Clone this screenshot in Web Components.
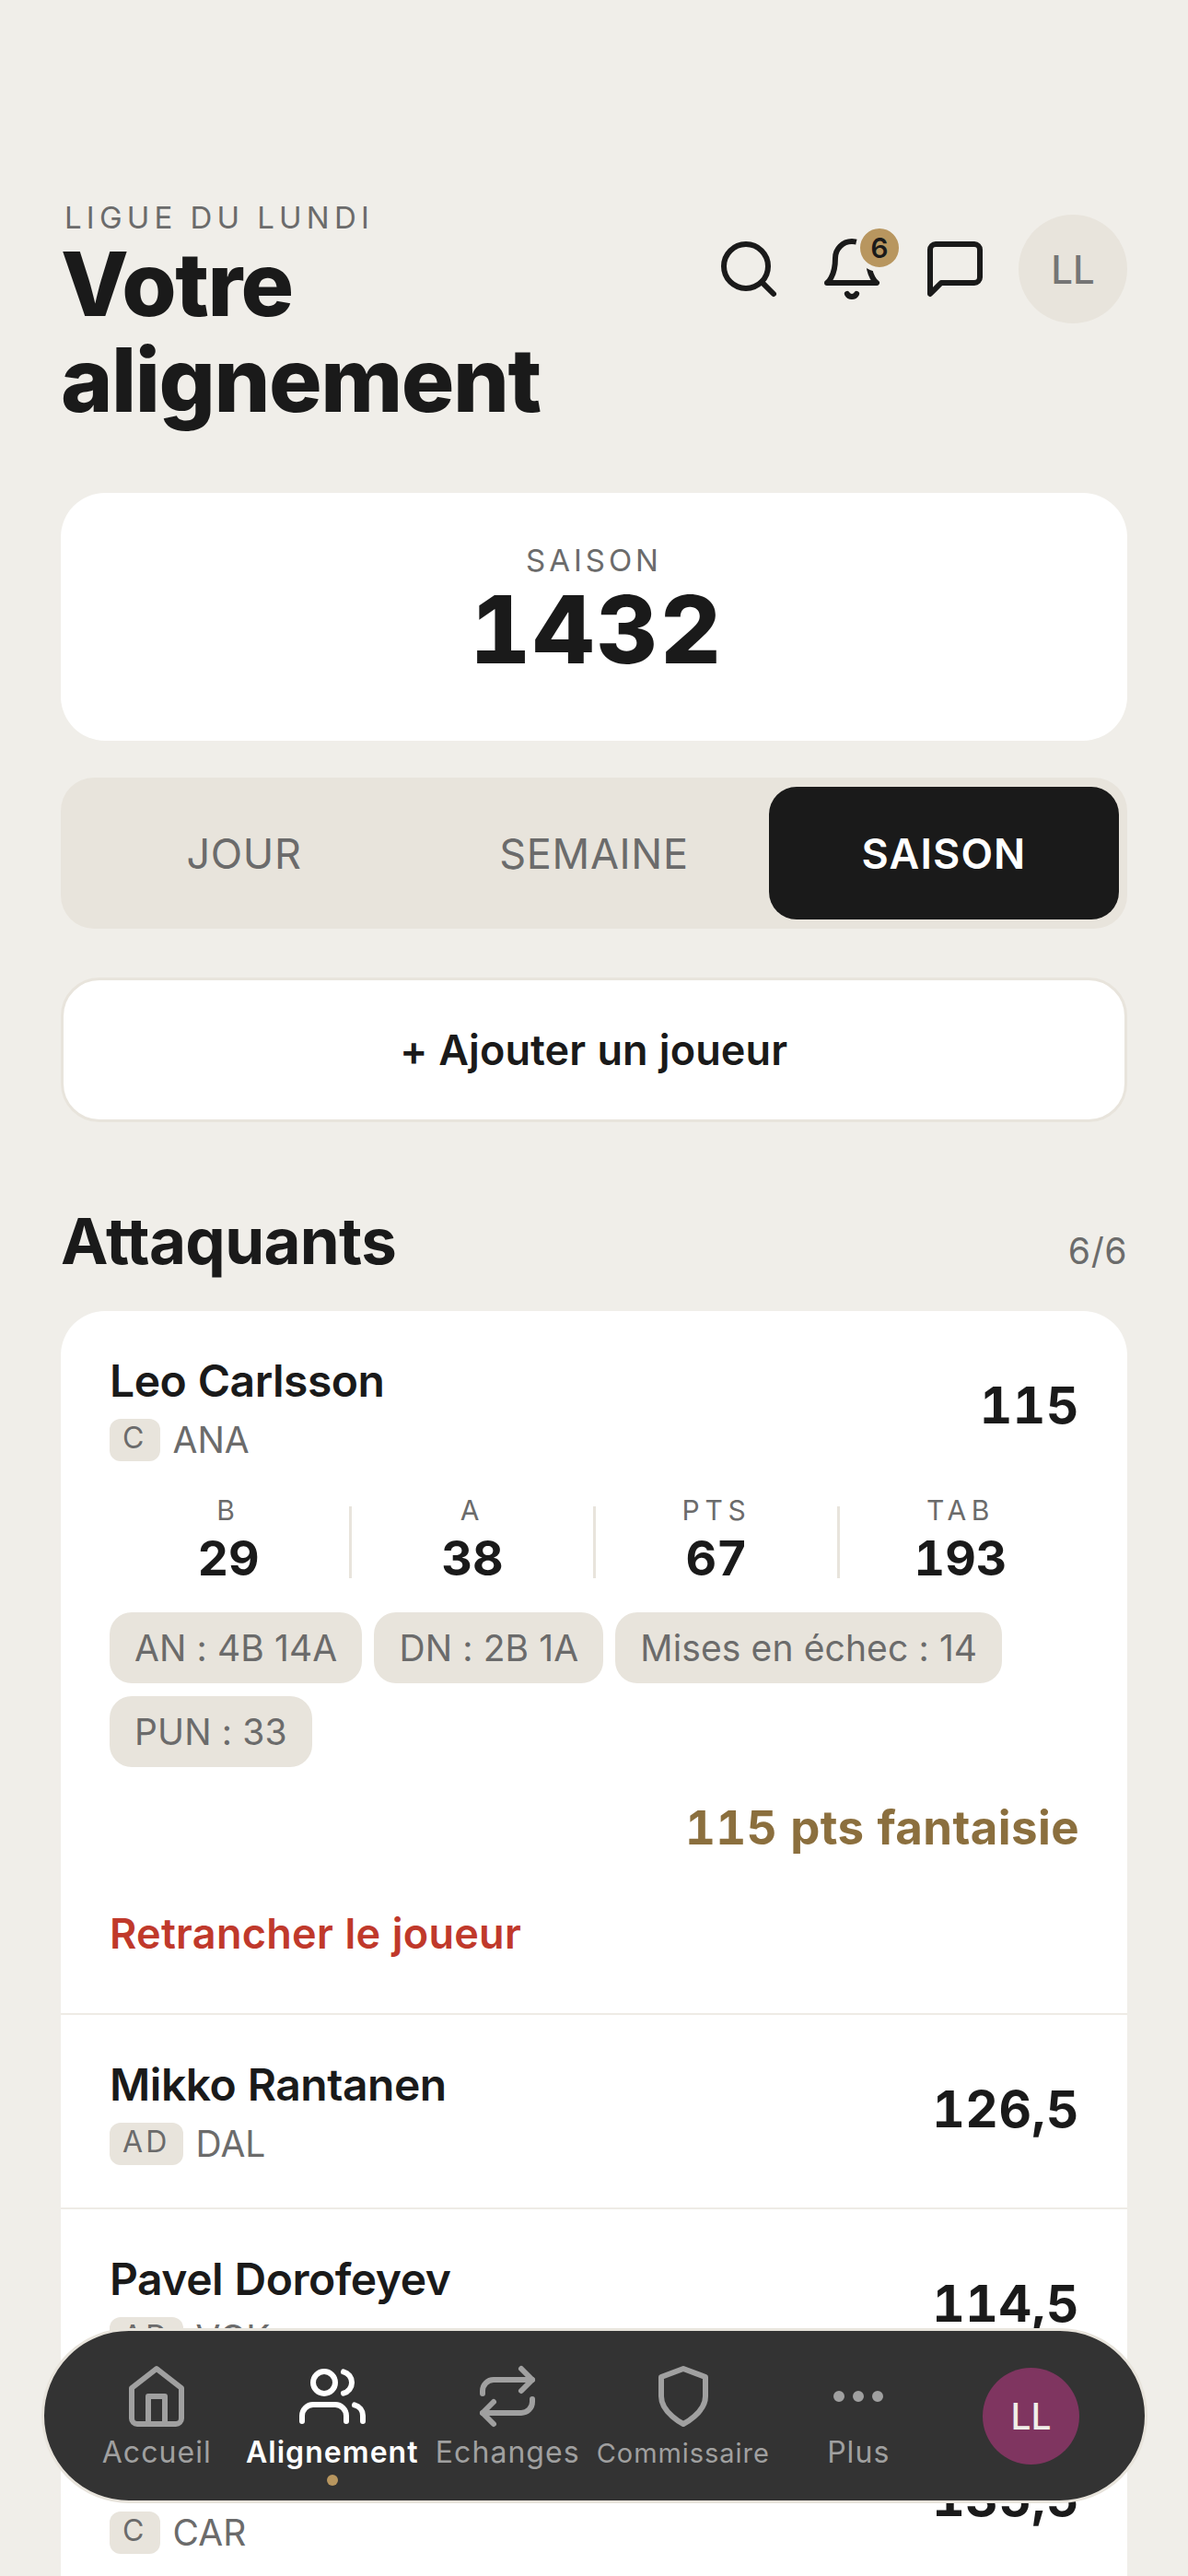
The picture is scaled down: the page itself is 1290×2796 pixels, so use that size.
<!DOCTYPE html>
<html lang="fr">
<head>
<meta charset="utf-8">
<title>Votre alignement</title>
<style>
  html, body {
    margin: 0;
    height: 2796px;
    overflow: hidden;
  }

  body {
    background: #f0eee9;
    color: #1a1a1a;
    font-family: Inter, "Liberation Sans", sans-serif;
    font-variant-numeric: tabular-nums;
    position: relative;
  }

  main {
    display: flex;
    flex-direction: column;
    padding: 216px 66px 0;
  }
</style>
</head>
<body>
<main>
  <app-header eyebrow="LIGUE DU LUNDI" initials="LL" count="6">Votre<br>alignement</app-header>
  <score-card label="SAISON" value="1432"></score-card>
  <period-tabs></period-tabs>
  <add-button>+ Ajouter un joueur</add-button>
  <section-head count="6/6">Attaquants</section-head>
  <roster-card>
    <player-row name="Leo Carlsson" pos="C" team="ANA" score="115">
      <stat-strip></stat-strip>
      <chip-list>
        <stat-chip>AN : 4B 14A</stat-chip>
        <stat-chip>DN : 2B 1A</stat-chip>
        <stat-chip>Mises en échec : 14</stat-chip>
        <stat-chip>PUN : 33</stat-chip>
      </chip-list>
      <row-footer points="115 pts fantaisie" action="Retrancher le joueur"></row-footer>
    </player-row>
    <player-row name="Mikko Rantanen" pos="AD" team="DAL" score="126,5"></player-row>
    <player-row name="Pavel Dorofeyev" pos="AD" team="VGK" score="114,5"></player-row>
    <player-row name="Sebastian Aho" pos="C" team="CAR" score="135,5"></player-row>
  </roster-card>
</main>
<bottom-nav>
  <nav-item icon="home">Accueil</nav-item>
  <nav-item icon="users" active>Alignement</nav-item>
  <nav-item icon="repeat">Echanges</nav-item>
  <nav-item icon="shield" small>Commissaire</nav-item>
  <nav-item icon="more">Plus</nav-item>
</bottom-nav>

<script>
const ICONS = {
  search: '<circle cx="11" cy="11" r="8"/><path d="m21 21-4.3-4.3"/>',
  bell: '<path d="M6 8a6 6 0 0 1 12 0c0 7 3 9 3 9H3s3-2 3-9"/><path d="M10.3 21a1.94 1.94 0 0 0 3.4 0"/>',
  chat: '<path d="M21 15a2 2 0 0 1-2 2H7l-4 4V5a2 2 0 0 1 2-2h14a2 2 0 0 1 2 2z"/>',
  home: '<path d="m3 9 9-7 9 7v11a2 2 0 0 1-2 2H5a2 2 0 0 1-2-2z"/><path d="M9 22V12h6v10"/>',
  users: '<path d="M17 21v-2a4 4 0 0 0-4-4H5a4 4 0 0 0-4 4v2"/><circle cx="9" cy="7" r="4"/><path d="M23 21v-2a4 4 0 0 0-3-3.87"/><path d="M16 3.13a4 4 0 0 1 0 7.75"/>',
  repeat: '<path d="m17 2 4 4-4 4"/><path d="M3 11v-1a4 4 0 0 1 4-4h14"/><path d="m7 22-4-4 4-4"/><path d="M21 13v1a4 4 0 0 1-4 4H3"/>',
  shield: '<path d="M12 22s8-4 8-10V5l-8-3-8 3v7c0 6 8 10 8 10z"/>',
  more: '<circle cx="5" cy="12" r="1"/><circle cx="12" cy="12" r="1"/><circle cx="19" cy="12" r="1"/>'
};

const icon = ( name ) => /* html */ `
  <svg width="72" height="72" viewBox="0 0 24 24" fill="none" stroke="currentColor" stroke-width="2" stroke-linecap="round" stroke-linejoin="round">${ICONS[name]}</svg>
`;

// Small helper, every element is a shadow root plus a bit of markup
class Base extends HTMLElement {
  constructor() {
    super();
    this.attachShadow( {mode: 'open'} );
  }

  connectedCallback() {
    this.shadowRoot.innerHTML = this.markup();
  }

  attr( name ) {
    return this.getAttribute( name ) || '';
  }
}

class AppHeader extends Base {
  markup() {
    return /* html */ `
      <style>
        :host {
          display: flex;
          justify-content: space-between;
          align-items: flex-start;
        }

        .eyebrow {
          color: #6b6b6b;
          font-size: 33px;
          line-height: 40px;
          letter-spacing: 0.157em;
          margin-left: 4px;
        }

        h1 {
          margin: 0;
          font-size: 96px;
          line-height: 104px;
          font-weight: 800;
          letter-spacing: -0.015em;
        }

        .actions {
          display: flex;
          align-items: center;
          margin-top: 17px;
        }

        .icon {
          width: 72px;
          height: 72px;
          margin-right: 40px;
          position: relative;
        }

        .icon:nth-child( 3 ) {
          margin-right: 33px;
        }

        svg {
          display: block;
        }

        .badge {
          position: absolute;
          top: -13px;
          left: 40px;
          width: 42px;
          height: 42px;
          border: 5px solid #f0eee9;
          border-radius: 50%;
          background: #b8965f;
          font-size: 30px;
          font-weight: 600;
          line-height: 42px;
          text-align: center;
        }

        .avatar {
          width: 118px;
          height: 118px;
          border-radius: 50%;
          background: #e8e4dc;
          color: #757575;
          display: flex;
          align-items: center;
          justify-content: center;
          font-size: 42px;
          font-weight: 500;
        }
      </style>
      <div>
        <div class="eyebrow">${this.attr( 'eyebrow' )}</div>
        <h1><slot></slot></h1>
      </div>
      <div class="actions">
        <div class="icon">${icon( 'search' )}</div>
        <div class="icon">${icon( 'bell' )}<span class="badge">${this.attr( 'count' )}</span></div>
        <div class="icon">${icon( 'chat' )}</div>
        <div class="avatar">${this.attr( 'initials' )}</div>
      </div>
    `;
  }
}

class ScoreCard extends Base {
  markup() {
    return /* html */ `
      <style>
        :host {
          display: flex;
          flex-direction: column;
          align-items: center;
          box-sizing: border-box;
          height: 269px;
          margin-top: 71px;
          padding-top: 53px;
          background: #fff;
          border-radius: 48px;
        }

        .label {
          color: #6b6b6b;
          font-size: 33px;
          line-height: 40px;
          letter-spacing: 0.12em;
        }

        .value {
          font-size: 102px;
          line-height: 110px;
          font-weight: 800;
          letter-spacing: 0.03em;
          margin-left: 6px;
        }
      </style>
      <div class="label">${this.attr( 'label' )}</div>
      <div class="value">${this.attr( 'value' )}</div>
    `;
  }
}

class PeriodTabs extends Base {
  markup() {
    return /* html */ `
      <style>
        :host {
          display: grid;
          grid-template-columns: repeat( 3, 1fr );
          box-sizing: border-box;
          height: 164px;
          margin-top: 40px;
          padding: 10px 9px;
          background: #e8e4dc;
          border-radius: 36px;
        }

        div {
          display: flex;
          align-items: center;
          justify-content: center;
          color: #6b6b6b;
          font-size: 45px;
          letter-spacing: 0.015em;
          border-radius: 30px;
        }

        .active {
          background: #1a1a1a;
          color: #fff;
          font-weight: 600;
          letter-spacing: 0.025em;
        }
      </style>
      <div>JOUR</div>
      <div>SEMAINE</div>
      <div class="active">SAISON</div>
    `;
  }
}

class AddButton extends Base {
  markup() {
    return /* html */ `
      <style>
        :host {
          display: flex;
          align-items: center;
          justify-content: center;
          box-sizing: border-box;
          height: 157px;
          margin-top: 53px;
          background: #fff;
          border: 3px solid #e8e4dc;
          border-radius: 42px;
          font-size: 45px;
          font-weight: 600;
          letter-spacing: 0.002em;
        }
      </style>
      <slot></slot>
    `;
  }
}

class SectionHead extends Base {
  markup() {
    return /* html */ `
      <style>
        :host {
          display: flex;
          justify-content: space-between;
          align-items: baseline;
          margin-top: 87px;
          margin-bottom: 34px;
        }

        h2 {
          margin: 0;
          font-size: 69px;
          line-height: 84px;
          font-weight: 700;
          letter-spacing: -0.01em;
        }

        span {
          color: #6b6b6b;
          font-size: 39px;
        }
      </style>
      <h2><slot></slot></h2>
      <span>${this.attr( 'count' )}</span>
    `;
  }
}

class RosterCard extends Base {
  markup() {
    return /* html */ `
      <style>
        :host {
          display: block;
          background: #fff;
          border-radius: 48px 48px 0 0;
        }
      </style>
      <slot></slot>
    `;
  }
}

class PlayerRow extends Base {
  markup() {
    return /* html */ `
      <style>
        :host {
          display: block;
          box-sizing: border-box;
          padding: 47px 53px 46px;
          border-bottom: 2px solid #eeebe5;
        }

        .top {
          display: flex;
          justify-content: space-between;
          align-items: center;
        }

        .name {
          font-size: 48px;
          line-height: 58px;
          font-weight: 600;
          letter-spacing: -0.01em;
        }

        .meta {
          display: flex;
          align-items: center;
          gap: 14px;
          margin-top: 11px;
          color: #6b6b6b;
          font-size: 39px;
        }

        .pos {
          height: 46px;
          padding: 0 14px;
          border-radius: 12px;
          background: #e8e4dc;
          font-size: 32px;
          line-height: 42px;
          letter-spacing: 0.1em;
        }

        .score {
          font-size: 55px;
          font-weight: 700;
          letter-spacing: 0.01em;
          padding-bottom: 6px;
          margin-right: -1px;
        }
      </style>
      <div class="top">
        <div>
          <div class="name">${this.attr( 'name' )}</div>
          <div class="meta"><span class="pos">${this.attr( 'pos' )}</span><span>${this.attr( 'team' )}</span></div>
        </div>
        <div class="score">${this.attr( 'score' )}</div>
      </div>
      <slot></slot>
    `;
  }
}

class StatStrip extends Base {
  markup() {
    const stats = [ ['B', '29'], ['A', '38'], ['PTS', '67'], ['TAB', '193'] ];
    const cols = stats.map( ( [label, value] ) => /* html */ `
      <div class="col">
        <div class="label">${label}</div>
        <div class="value">${value}</div>
      </div>
    ` ).join( '<i></i>' );

    return /* html */ `
      <style>
        :host {
          display: flex;
          align-items: center;
          margin: 35px 0 0 1px;
        }

        .col {
          flex: 0 0 256px;
          text-align: center;
        }

        .label {
          color: #6b6b6b;
          font-size: 30px;
          line-height: 36px;
          letter-spacing: 0.19em;
          margin-bottom: 5px;
        }

        .value {
          font-size: 52px;
          line-height: 60px;
          font-weight: 700;
        }

        i {
          flex: 0 0 3px;
          height: 78px;
          margin: 5px 1px 0 3px;
          background: #e8e4dc;
        }

        i + .col {
          margin-left: 2px;
        }
      </style>
      ${cols}
    `;
  }
}

class ChipList extends Base {
  markup() {
    return /* html */ `
      <style>
        :host {
          display: flex;
          flex-wrap: wrap;
          gap: 14px 13px;
          margin-top: 28px;
        }
      </style>
      <slot></slot>
    `;
  }
}

class StatChip extends Base {
  markup() {
    return /* html */ `
      <style>
        :host {
          display: block;
          padding: 0 27px;
          border-radius: 24px;
          background: #e8e4dc;
          color: #6b6b6b;
          font-size: 39px;
          font-variant-numeric: normal;
          letter-spacing: 0.003em;
          line-height: 77px;
        }
      </style>
      <slot></slot>
    `;
  }
}

class RowFooter extends Base {
  markup() {
    return /* html */ `
      <style>
        :host {
          display: block;
          margin-bottom: 12px;
        }

        .points {
          margin: 35px -1px 0 0;
          color: #8b6f3e;
          font-size: 51px;
          line-height: 62px;
          font-weight: 700;
          letter-spacing: 0.008em;
          text-align: right;
        }

        .action {
          margin-top: 56px;
          color: #c0392b;
          font-size: 45px;
          line-height: 56px;
          font-weight: 600;
          letter-spacing: 0.006em;
        }
      </style>
      <div class="points">${this.attr( 'points' )}</div>
      <div class="action">${this.attr( 'action' )}</div>
    `;
  }
}

class BottomNav extends Base {
  markup() {
    return /* html */ `
      <style>
        :host {
          position: absolute;
          left: 45px;
          top: 2527px;
          width: 1201px;
          height: 190px;
          box-sizing: border-box;
          display: flex;
          align-items: center;
          padding: 0 71px 0 27px;
          background: #333;
          border: 3px solid #e8e4dc;
          border-radius: 95px;
        }

        .avatar {
          flex: 0 0 105px;
          height: 105px;
          margin-left: auto;
          border-radius: 50%;
          background: #7f3560;
          color: #f0eee9;
          display: flex;
          align-items: center;
          justify-content: center;
          font-size: 39px;
          font-weight: 500;
        }
      </style>
      <slot></slot>
      <div class="avatar">LL</div>
    `;
  }
}

class NavItem extends Base {
  markup() {
    return /* html */ `
      <style>
        :host {
          flex: 0 0 190.5px;
          display: flex;
          flex-direction: column;
          align-items: center;
          position: relative;
          height: 184px;
          box-sizing: border-box;
          padding-top: 35px;
          color: #a0a0a0;
          font-size: 32px;
          letter-spacing: 0.033em;
        }

        :host( [active] ) {
          color: #fff;
          font-weight: 600;
        }

        :host( [small] ) {
          font-size: 29px;
        }

        svg {
          display: block;
        }

        .label {
          height: 40px;
          line-height: 40px;
          margin-top: 5px;
          white-space: nowrap;
        }

        :host( [small] ) .label {
          line-height: 42px;
        }

        .dot {
          position: absolute;
          left: 50%;
          top: 156px;
          width: 12px;
          height: 12px;
          margin-left: -6px;
          border-radius: 50%;
          background: #b8965f;
        }
      </style>
      ${icon( this.attr( 'icon' ) )}
      <div class="label"><slot></slot></div>
      ${this.hasAttribute( 'active' ) ? '<div class="dot"></div>' : ''}
    `;
  }
}

window.customElements.define( 'app-header', AppHeader );
window.customElements.define( 'score-card', ScoreCard );
window.customElements.define( 'period-tabs', PeriodTabs );
window.customElements.define( 'add-button', AddButton );
window.customElements.define( 'section-head', SectionHead );
window.customElements.define( 'roster-card', RosterCard );
window.customElements.define( 'player-row', PlayerRow );
window.customElements.define( 'stat-strip', StatStrip );
window.customElements.define( 'chip-list', ChipList );
window.customElements.define( 'stat-chip', StatChip );
window.customElements.define( 'row-footer', RowFooter );
window.customElements.define( 'bottom-nav', BottomNav );
window.customElements.define( 'nav-item', NavItem );
</script>
</body>
</html>
